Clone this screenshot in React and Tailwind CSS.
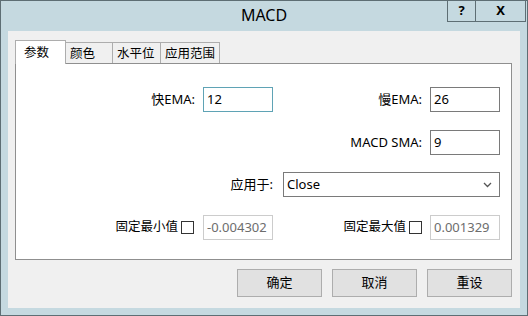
import { useState } from "react";

const font = { fontFamily: '"Noto Sans", "Noto Sans CJK SC", sans-serif' };

function Field({ value, focused, disabled }) {
  const border = focused
    ? "border-[#5fa3b5]"
    : disabled
    ? "border-[#cccccc] text-[#6d6d6d]"
    : "border-[#7a7a7a] text-black";
  return (
    <div className={`flex h-[25px] w-[70px] items-center border bg-white pl-[3px] text-[13px] ${border}`}>
      {value}
    </div>
  );
}

function Check() {
  return <div className="ml-[3px] h-[13px] w-[13px] border border-[#333] bg-white" />;
}

export default function App() {
  const [tab, setTab] = useState(0);
  const tabs = [
    { label: "参数", w: "w-[51px]" },
    { label: "颜色", w: "w-[47px]" },
    { label: "水平位", w: "w-[48px]" },
    { label: "应用范围", w: "w-[59px]" },
  ];

  return (
    <div className="flex h-[316px] w-[528px] flex-col border border-[#5e6e74] bg-[#c5d9e0] text-black" style={font}>
      <div className="grid h-[30px] grid-cols-[1fr_auto_1fr]">
        <div />
        <div className="flex h-[28px] items-center text-[16px]">MACD</div>
        <div className="flex justify-end self-start pr-px">
          <div className="flex h-[21px] w-[29px] items-center justify-center border-x border-b border-[#5e6e74] text-[13px] font-bold">?</div>
          <div className="flex h-[21px] w-[50px] items-center justify-center border-r border-b border-[#5e6e74] text-[13px] font-bold">X</div>
        </div>
      </div>

      <div className="mx-[7px] flex flex-1 flex-col bg-[#f0f0f0] pl-[7px] pr-[8px] pt-[9px]">
        <div className="flex h-[23px] items-end">
          {tabs.map((t, i) => (
            <button
              key={i}
              onClick={() => setTab(i)}
              className={
                i === tab
                  ? `relative z-10 -mb-px flex h-[24px] ${t.w} items-start border border-b-0 border-[#adadad] bg-white pl-[8px] pt-[3px] text-[12.5px]`
                  : `flex h-[21px] ${t.w} items-start border border-b-0 border-l-0 border-[#adadad] bg-[#f0f0f0] pl-[4px] pt-[2px] text-[12.5px]`
              }
            >
              {t.label}
            </button>
          ))}
        </div>

        <div className="flex h-[197px] flex-col border border-[#8f8f8f] bg-white pt-[23px] text-[13px]">
          <div className="flex h-[25px] items-center">
            <div className="w-[187px] pr-[8px] text-right">快EMA:</div>
            <Field value="12" focused />
            <div className="w-[157px] pr-[8px] text-right">慢EMA:</div>
            <Field value="26" />
          </div>

          <div className="mt-[18px] flex h-[25px] items-center">
            <div className="w-[257px]" />
            <div className="w-[157px] pr-[8px] text-right">MACD SMA:</div>
            <Field value="9" />
          </div>

          <div className="mt-[17px] flex h-[25px] items-center">
            <div className="w-[267px] pr-[10px] text-right">应用于:</div>
            <div className="flex h-[25px] w-[217px] items-center justify-between border border-[#7a7a7a] bg-white pl-[3px] pr-[7px]">
              <span>Close</span>
              <svg width="9" height="6" viewBox="0 0 9 6">
                <path d="M1 1l3.5 3.5L8 1" fill="none" stroke="#555" strokeWidth="1.3" />
              </svg>
            </div>
          </div>

          <div className="mt-[18px] flex h-[25px] items-center">
            <div className="flex w-[187px] items-center justify-end pr-[9px]">
              <span className="text-[12.5px]">固定最小值</span>
              <Check />
            </div>
            <Field value="-0.004302" disabled />
            <div className="flex w-[157px] items-center justify-end pr-[8px]">
              <span className="text-[12.5px]">固定最大值</span>
              <Check />
            </div>
            <Field value="0.001329" disabled />
          </div>
        </div>

        <div className="mt-[9px] flex justify-end gap-[10px] text-[13px]">
          {["确定", "取消", "重设"].map((b) => (
            <button key={b} className="flex h-[28px] w-[85px] items-center justify-center border border-[#adadad] bg-[#e1e1e1]">
              {b}
            </button>
          ))}
        </div>
      </div>
      <div className="h-[7px]" />
    </div>
  );
}
